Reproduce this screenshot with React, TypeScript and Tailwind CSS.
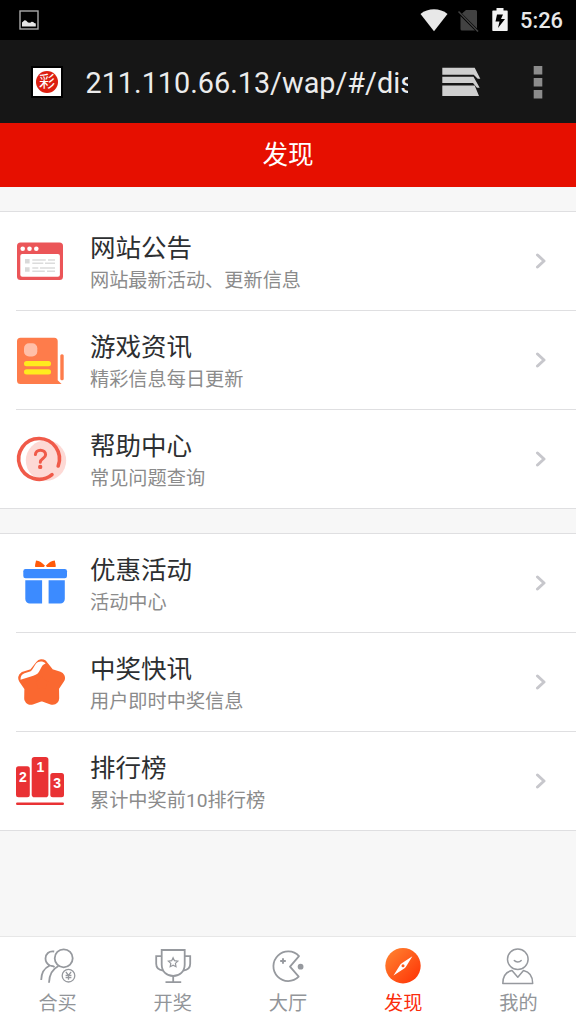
import type { ReactNode } from 'react';
import clsx from 'clsx';

const NoticeIcon = () => (
  <svg viewBox="0 0 50 50" className="size-[50px] shrink-0">
    <rect x="1" y="6.5" width="46" height="37.5" rx="3.5" fill="#eb5558" />
    <rect x="4.3" y="18" width="39.6" height="22.8" rx="2" fill="#fff" />
    <circle cx="6.7" cy="12.7" r="2.3" fill="#fff" />
    <circle cx="13.5" cy="12.7" r="2.3" fill="#fff" />
    <circle cx="20.3" cy="12.7" r="2.3" fill="#fff" />
    <path d="M9 23h4.6v4.6H9zM9 31.2h4.6v4.6H9z" fill="#d9d9d9" />
    <path
      d="M16.3 24h13.5M32 24h7M16.3 27.2h11M29 27.2h10M16.3 32h6M24 32h15M16.3 35.3h12.5M31 35.3h8"
      stroke="#dcdcdc"
      strokeWidth="1.4"
    />
  </svg>
);

const NewsIcon = () => (
  <svg viewBox="0 0 50 50" className="size-[50px] shrink-0">
    <path
      d="M4.5 2.7h33.7a3.5 3.5 0 0 1 3.5 3.5v39L45.6 49H4.5A3.5 3.5 0 0 1 1 45.5V6.2a3.5 3.5 0 0 1 3.5-3.5z"
      fill="#fe7c4b"
    />
    <rect x="44.3" y="19.2" width="3.4" height="26" rx="1.5" fill="#fe7c4b" />
    <rect x="8" y="8.2" width="13.3" height="13.2" rx="5" fill="#ffbfa8" />
    <rect x="8" y="26" width="27" height="5.2" rx="2.5" fill="#ffeb1e" />
    <rect x="8" y="34.3" width="27" height="5.2" rx="2.5" fill="#ffeb1e" />
  </svg>
);

const HelpIcon = () => (
  <svg viewBox="0 0 50 50" className="size-[50px] shrink-0 overflow-visible">
    <circle cx="30" cy="26.5" r="20.2" fill="#fdd9d5" />
    <g fill="none" stroke="#f05a49" strokeLinecap="round">
      <path d="M36 40.7A20.4 20.4 0 1 1 42.2 32" strokeWidth="3.6" />
      <path
        d="M19.4 20.600a5 4.600 0 0 1 5-4.400c3 0 5.200 1.900 5.200 4.500 0 3.900-5.300 3.600-5.300 7.600"
        strokeWidth="3"
      />
    </g>
    <circle cx="24.2" cy="32.9" r="2.2" fill="#f05a49" />
  </svg>
);

const GiftIcon = () => (
  <svg viewBox="0 0 50 50" className="size-[50px] shrink-0 overflow-visible">
    <path
      d="M20 2.400c3.400.2 6.200 2.300 9 5.300L27.800 9h-8.600c-.6-1.700.7-4.700.8-6.600zM38.800 2.400c-3.400.2-6.200 2.300-9 5.300L31 9h8.600c.6-1.700-.7-4.700-.8-6.600z"
      fill="#ff5a0a"
    />
    <rect x="7.3" y="11" width="43.7" height="9.3" rx="2.2" fill="#3c8bff" />
    <path
      d="M9.3 22.300h16.800v23.200H13.800a4.500 4.500 0 0 1-4.500-4.500zM32.600 22.300h16.200V41a4.500 4.500 0 0 1-4.500 4.500H32.600z"
      fill="#3c8bff"
    />
  </svg>
);

const StarIcon = () => (
  <svg viewBox="0 0 50 50" className="size-[50px] shrink-0">
    <path
      d="M25.600 8.700 33 18l9.500 3-6 9 .2 11.300-11-4-11 4 .2-11.300-6.200-9 9.500-3z"
      fill="#fa6830"
      stroke="#fa6830"
      strokeWidth="13"
      strokeLinejoin="round"
    />
    <path
      d="M4.500 22.700c.1-3.500 1.200-5.500 4-6.400l4.700-1.500c2.300-.8 3.100-2.100 4.200-4.100l1.800-3c2.200-3.600 7.200-4.200 10.400-1.300-3 .9-4.100 3.300-5.500 6.400-1.600 3.400-3.300 5-6.800 6z"
      fill="#fff"
    />
  </svg>
);

const RankIcon = () => (
  <svg viewBox="0 0 50 50" className="size-[50px] shrink-0">
    <g fill="#e93234">
      <rect x="0" y="10.2" width="13.8" height="31" rx="2.5" />
      <rect x="15.7" y="1" width="16.7" height="40.2" rx="2.8" />
      <rect x="34.3" y="17" width="13.7" height="24.2" rx="2.5" />
      <rect x="0" y="46.5" width="48" height="2.4" rx="1.2" />
    </g>
    <g
      fill="#fff"
      fontFamily="'Liberation Sans', sans-serif"
      fontWeight="700"
      fontSize="14"
      textAnchor="middle"
    >
      <text x="6.8" y="25.7">2</text>
      <text x="24.5" y="16">1</text>
      <text x="41.2" y="32">3</text>
    </g>
  </svg>
);

const GroupBuyIcon = () => (
  <svg viewBox="0 0 40 40" className="size-10" fill="none" stroke="#96999e" strokeWidth="1.8">
    <circle cx="25.700" cy="12.300" r="9" />
    <path d="M16.200 5.500c-5.200-.9-8.700 2.700-8.700 7 0 3.300 2 5.700 4.300 7C6.500 22 3.300 27.500 3.200 34M16.500 21c-1.500-1.300-2.700-1.300-4-1.200M20.500 20C14.500 23 11.200 29 11 36.800" />
    <circle cx="30.500" cy="29.700" r="6.300" strokeWidth="1.300" />
    <path d="m27.900 26 2.600 3.300 2.600-3.300M27.600 29.500h5.800M27.600 31.700h5.800M30.500 29.300v4.500" strokeWidth="1.300" />
  </svg>
);

const TrophyIcon = () => (
  <svg viewBox="0 0 40 40" className="size-10" fill="none" stroke="#96999e" strokeWidth="1.8">
    <path d="M8.700 4h23v14.500c0 7-5 11.500-11.500 11.500S8.700 25.500 8.700 18.500z" />
    <path d="M8.700 10.200H3.200v7.500c0 4.200 2.600 6.300 6.800 6.800M31.700 10.200h5.500v7.500c0 4.200-2.600 6.300-6.800 6.800M20.200 30v6M12.500 36.200h15.700" />
    <path
      d="m20.100 11.700 1.400 3 3.300.4-2.400 2.300.6 3.300-2.900-1.600-2.900 1.600.6-3.300-2.400-2.300 3.300-.4z"
      strokeWidth="1.2"
    />
  </svg>
);

const LobbyIcon = () => (
  <svg viewBox="0 0 40 40" className="size-10" fill="none" stroke="#96999e" strokeWidth="1.8">
    <path
      d="M31 10.100A14.800 14.800 0 1 0 30.700 30.700L22 20.700z"
      strokeLinejoin="round"
    />
    <path d="M12.200 15h5.600M15 12.200v5.600" strokeWidth="1.900" />
    <circle cx="32.600" cy="20.700" r="2.900" fill="#96999e" stroke="none" />
  </svg>
);

const DiscoverIcon = () => (
  <svg viewBox="0 0 40 40" className="size-10">
    <defs>
      <linearGradient id="compass" x1="0" y1="0" x2="1" y2="1">
        <stop offset="0.1" stopColor="#ff7e2e" />
        <stop offset="0.9" stopColor="#ff3808" />
      </linearGradient>
    </defs>
    <circle cx="20" cy="19.7" r="17.7" fill="url(#compass)" />
    <path d="m29.400 10.300-6.600 10.600a3.800 3.800 0 0 1-1.600 1.500l-10.700 7 6.700-10.600a3.800 3.800 0 0 1 1.600-1.500z" fill="#fff" />
    <circle cx="20" cy="19.7" r="1.500" fill="#ff5a1c" />
  </svg>
);

const ProfileIcon = () => (
  <svg viewBox="0 0 40 40" className="size-10" fill="none" stroke="#96999e" strokeWidth="1.5" strokeLinejoin="round">
    <circle cx="19.800" cy="13.200" r="10.300" />
    <path d="M16.300 14.600c1.600 1.900 5.200 1.900 6.900 0" strokeLinecap="round" />
    <path d="M4.800 37.400c0-6.500 2.500-11.400 9.200-12.900l5.800 6.800 5.700-6.800c6.700 1.500 9.200 6.400 9.200 12.900z" />
  </svg>
);

type Item = { title: string; desc: string; icon: ReactNode };

const groups: Item[][] = [
  [
    { title: '网站公告', desc: '网站最新活动、更新信息', icon: <NoticeIcon /> },
    { title: '游戏资讯', desc: '精彩信息每日更新', icon: <NewsIcon /> },
    { title: '帮助中心', desc: '常见问题查询', icon: <HelpIcon /> },
  ],
  [
    { title: '优惠活动', desc: '活动中心', icon: <GiftIcon /> },
    { title: '中奖快讯', desc: '用户即时中奖信息', icon: <StarIcon /> },
    { title: '排行榜', desc: '累计中奖前10排行榜', icon: <RankIcon /> },
  ],
];

const tabs = [
  { label: '合买', icon: <GroupBuyIcon /> },
  { label: '开奖', icon: <TrophyIcon /> },
  { label: '大厅', icon: <LobbyIcon /> },
  { label: '发现', icon: <DiscoverIcon />, active: true },
  { label: '我的', icon: <ProfileIcon /> },
];

function StatusBar() {
  return (
    <div className="flex h-10 items-center justify-between bg-black pr-[13px] pl-[19px]">
      <svg viewBox="0 0 20 20" className="size-5">
        <rect x="1" y="1" width="18" height="18" fill="none" stroke="#aaa" strokeWidth="1.4" />
        <path d="M3 16.500v-4l2.500-2.300 1.500.2 2 2 2.200.3 1.500-.9 1.500.2 1 1 1.600.6v2.900z" fill="#e6e6e6" />
      </svg>
      <div className="flex items-center">
        <svg viewBox="0 0 28 24" className="h-6 w-7">
          <path d="M.5 6C8-.2 20-.2 27.500 6L14 23.300z" fill="#e8e8e8" />
        </svg>
        <svg viewBox="0 0 22 24" className="ml-[9px] h-6 w-[22px]">
          <path d="M9 2h9.500a1.500 1.500 0 0 1 1.500 1.500v17L5 5.500zM3.500 8 18 22.500H5A1.500 1.500 0 0 1 3.500 21z" fill="#424242" />
          <path d="m1.500 3.500 19.500 20" stroke="#424242" strokeWidth="1.5" />
        </svg>
        <svg viewBox="0 0 16 24" className="ml-[13px] h-6 w-4">
          <path
            d="M4.500 0h7v2.500H15a.7.700 0 0 1 .7.700v19.100a.7.700 0 0 1-.7.700H1a.7.700 0 0 1-.7-.7V3.200a.7.700 0 0 1 .7-.7h3.500z"
            fill="#f2f2f2"
          />
          <path d="M5 6.500h6L9 11h4L6 20l1.500-6.500H3.500z" fill="#000" />
        </svg>
        <span className="ml-3 pt-0.5 font-['Roboto',sans-serif] text-[21.8px] leading-none font-medium text-[#e8e8e8]">
          5:26
        </span>
      </div>
    </div>
  );
}

function BrowserBar() {
  return (
    <div className="flex h-[83px] items-center bg-[#161616] pl-[31px]">
      <div className="flex size-8 shrink-0 items-center justify-center border-2 border-black bg-white">
        <span className="flex size-[22px] items-center justify-center rounded-full bg-[#dc1f10] text-base leading-none text-white">
          彩
        </span>
      </div>
      <div className="ml-[22.5px] w-[322.5px] shrink-0 overflow-hidden pt-0.5 font-['Roboto',sans-serif] text-[28.8px] leading-10 whitespace-nowrap text-[#ececec]">
        211.110.66.13/wap/#/dis
      </div>
      <svg viewBox="0 0 40 31" className="ml-[33px] h-[31px] w-10 shrink-0" fill="#cfcfcf">
        <path d="M1.300 1.800h32.400l5.600 11h-2.600l-4-4H1.300zM1.300 10.800h31.200l6.200 11H36l-4-4.700H1.300zM1.300 19.500h32.400L38 30H1.300z" />
      </svg>
      <svg viewBox="0 0 10 34" className="ml-[52px] h-[34px] w-2.5 shrink-0" fill="#8c8c8c">
        <path d="M.7 1h8.600v8.600H.7zM.7 12.900h8.600v8.600H.7zM.7 24.900h8.600v8.600H.7z" />
      </svg>
    </div>
  );
}

function ListRow({ title, desc, icon }: Item) {
  return (
    <li className="ml-4 flex h-[99.2px] items-center border-b border-[#dfdfe1] last:h-[97.6px] last:border-b-0">
      {icon}
      <div className="ml-6 flex-1 pt-[3px]">
        <h2 className="text-[25.5px] leading-9 text-[#2d2f31]">{title}</h2>
        <p className="text-[19.2px] leading-[29px] text-[#8b8b8b]">{desc}</p>
      </div>
      <svg viewBox="0 0 12 16" className="mr-[29px] h-4 w-3">
        <path d="m2.500 2 6.500 6-6.500 6" fill="none" stroke="#c7c7cc" strokeWidth="3" strokeLinecap="round" strokeLinejoin="round" />
      </svg>
    </li>
  );
}

export default function App() {
  return (
    <div className="flex h-screen flex-col overflow-hidden bg-[#f7f7f7] font-['Roboto','Noto_Sans_CJK_SC',sans-serif]">
      <StatusBar />
      <BrowserBar />
      <header className="flex h-16 shrink-0 items-center justify-center bg-[#e60f00] pt-0.5">
        <h1 className="text-[25.6px] leading-none text-white">发现</h1>
      </header>
      <main className="flex flex-1 flex-col gap-6 pt-6">
        {groups.map((items, i) => (
          <ul key={i} className="border-y border-[#dfdfe1] bg-white">
            {items.map((item) => (
              <ListRow key={item.title} {...item} />
            ))}
          </ul>
        ))}
      </main>
      <nav className="grid h-22 shrink-0 grid-cols-5 border-t border-[#e7e7e7] bg-white">
        {tabs.map((tab) => (
          <a key={tab.label} className="flex flex-col items-center pt-[9px]">
            {tab.icon}
            <span
              className={clsx(
                'mt-1 text-[19.2px] leading-7',
                tab.active ? 'text-[#fb2c0c]' : 'text-[#929599]',
              )}
            >
              {tab.label}
            </span>
          </a>
        ))}
      </nav>
    </div>
  );
}
